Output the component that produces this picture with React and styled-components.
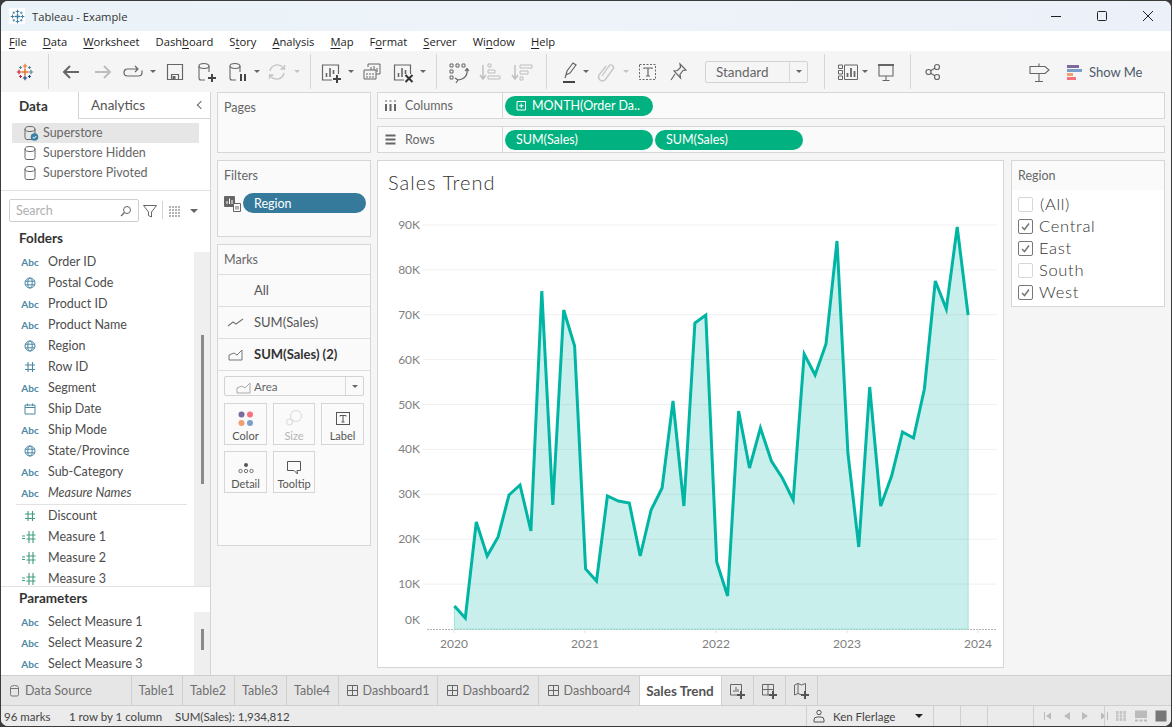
import React from "react";
import styled, { createGlobalStyle } from "styled-components";

const GlobalStyle = createGlobalStyle`
  html, body { margin: 0; padding: 0; height: 100%; background: #3b3b3b; overflow: hidden; }
  body { font-family: "Lato", "Liberation Sans", sans-serif; color: #555; }
  * { box-sizing: border-box; }
`;

const Svg = ({ size = 24, box, children, color }) => (
  <svg
    width={size}
    height={size}
    viewBox={box || `0 0 ${size} ${size}`}
    fill="none"
    stroke={color || "currentColor"}
    style={{ display: "block", flex: "none" }}
  >
    {children}
  </svg>
);

/* ---------- logos and toolbar icons ---------- */
const MarkCross = ({ x, y, r, w, c }) => (
  <path d={`M${x - r} ${y}H${x + r}M${x} ${y - r}V${y + r}`} stroke={c} strokeWidth={w} />
);

const TableauLogo = ({ colors }) => (
  <Svg size={18}>
    <MarkCross x={9} y={9} r={3.5} w={1.6} c={colors[0]} />
    <MarkCross x={9} y={3} r={2.2} w={1.2} c={colors[1]} />
    <MarkCross x={9} y={15} r={2.2} w={1.2} c={colors[2]} />
    <MarkCross x={3} y={9} r={2.2} w={1.2} c={colors[3]} />
    <MarkCross x={15} y={9} r={2.2} w={1.2} c={colors[4]} />
    <MarkCross x={4.5} y={4.5} r={1.5} w={1} c={colors[5]} />
    <MarkCross x={13.5} y={4.5} r={1.5} w={1} c={colors[5]} />
    <MarkCross x={4.5} y={13.5} r={1.5} w={1} c={colors[3]} />
    <MarkCross x={13.5} y={13.5} r={1.5} w={1} c={colors[2]} />
  </Svg>
);

const Plus = ({ x = 18, y = 18, c = "#444" }) => (
  <path d={`M${x - 4} ${y}H${x + 4}M${x} ${y - 4}V${y + 4}`} stroke={c} strokeWidth="2" />
);

const Arrow = ({ flip, color }) => (
  <Svg color={color}>
    <path d={flip ? "M4 12h15M13 6l6 6-6 6" : "M20 12H5M11 6l-6 6 6 6"} strokeWidth="2" />
  </Svg>
);
const CycleIcon = () => (
  <Svg>
    <path d="M3 12.5A3.5 3.5 0 0 1 6.5 9H17M21 10.5v2a3.5 3.5 0 0 1-3.5 3.5h-11A3.5 3.5 0 0 1 3 12.5M14 6l3 3-3 3" strokeWidth="1.2" />
  </Svg>
);
const SaveIcon = () => (
  <Svg>
    <path d="M4.5 4.5h15v15h-15zM8.5 19.5v-5h7v5" strokeWidth="1.2" />
    <rect x="9.5" y="16" width="3" height="3" fill="currentColor" stroke="none" />
  </Svg>
);
const Cylinder = ({ x = 9, h = 12 }) => (
  <>
    <ellipse cx={x} cy="6" rx="5" ry="2.5" strokeWidth="1.1" />
    <path d={`M${x - 5} 6v${h}a2 2 0 0 0 2 2h4M${x + 5} 6v6`} strokeWidth="1.1" />
  </>
);
const NewSourceIcon = () => (
  <Svg>
    <Cylinder />
    <Plus x={17} y={18} />
  </Svg>
);
const PauseSourceIcon = () => (
  <Svg>
    <Cylinder x={10} />
    <path d="M16 14v7M20 14v7" stroke="#444" strokeWidth="2" />
  </Svg>
);
const RefreshIcon = () => (
  <Svg color="#c4c4c4">
    <path d="M5 11a7.5 7.5 0 0 1 13-3.5l1.5 1.5M19 13a7.5 7.5 0 0 1-13 3.5L4.500 15M19.500 5v4h-4M4.500 19v-4h4" strokeWidth="1.3" />
  </Svg>
);
const NewSheetIcon = () => (
  <Svg>
    <path d="M13 20H3.500V5h16v9" strokeWidth="1.2" />
    <path d="M7.500 17v-4M11 17V8M14.500 14v-4" strokeWidth="1.6" />
    <Plus x={18} y={19} />
  </Svg>
);
const DuplicateIcon = () => (
  <Svg>
    <path d="M8 7V4h12v10h-4M4 10h12v9H4z" strokeWidth="1" />
    <path d="M11 10V7M14 10V6M17 12V8" strokeWidth="1" />
    <path d="M6 14h8M6 17h8" strokeWidth="1" strokeDasharray="2 1" />
  </Svg>
);
const ClearIcon = () => (
  <Svg>
    <path d="M13 20H3.500V5h16v9" strokeWidth="1.2" />
    <path d="M7.500 17v-4M11 17V8M14.500 14v-4" strokeWidth="1.6" />
    <path d="M14.500 15l7 7M21.500 15l-7 7" stroke="#333" strokeWidth="2" />
  </Svg>
);
const SwapIcon = () => (
  <Svg>
    <path d="M3 4h3v3H3zM9 4h3v3H9zM15 4h3v3h-3zM3 10h3v3H3zM3 16h3v3H3z" strokeWidth="1" />
    <path d="M20 9c1 6-2 10-9 11M8 18l3 2-2 3M18 11l2-2.500 2 2.500" strokeWidth="1.200" />
  </Svg>
);
const SortIcon = ({ desc }) => (
  <Svg color="#bdbdbd">
    <path d="M5 5v14M2 15l3 4 3-4" strokeWidth="1.4" />
    {desc ? (
      <path d="M10 5h12v3H10zM10 11h8v3h-8zM10 17h3v3h-3z" strokeWidth="1" />
    ) : (
      <path d="M10 4h3v3h-3zM10 10h7v3h-7zM10 16h12v3H10z" strokeWidth="1" />
    )}
  </Svg>
);
const HighlightIcon = () => (
  <Svg>
    <path d="M9 15l1-4 6-8 3 2-6 8zM8 18l1-3" strokeWidth="1.2" />
    <path d="M6 22h12" stroke="#444" strokeWidth="2" />
  </Svg>
);
const ClipIcon = () => (
  <Svg color="#c4c4c4">
    <path d="M8 16l7-10a2.500 2.500 0 0 1 4 3l-8 11a4 4 0 0 1-6-5l7-9" strokeWidth="1.300" />
  </Svg>
);
const LabelIcon = () => (
  <Svg>
    <rect x="3.500" y="4.500" width="16" height="15" strokeWidth="1" strokeDasharray="2 1.500" />
    <path d="M8 9V8h8v1M12 8v8M10 16h4" strokeWidth="1.200" />
  </Svg>
);
const PinIcon = () => (
  <Svg>
    <path d="M14 4l6 6-3 .5-3 4 .5 3.500L8 11l3.500-.5 3-3zM9 14l-4 6" strokeWidth="1.200" />
  </Svg>
);
const FitIcon = () => (
  <Svg>
    <path d="M1.500 5h4v3.500h-4zM1.500 10.500h4V14h-4zM1.500 16h4v3.500h-4zM7.500 5h13v14.500h-13z" strokeWidth="1" />
    <path d="M10.500 17v-4M14 17V8M17.500 17v-6" strokeWidth="1.800" />
  </Svg>
);
const PresentIcon = () => (
  <Svg>
    <path d="M4 5h16" strokeWidth="2" />
    <path d="M5 5v11h14V5M12 16v4.500M8.500 20.500h7" strokeWidth="1.100" />
  </Svg>
);
const ShareIcon = () => (
  <Svg>
    <circle cx="7.500" cy="12" r="2.500" strokeWidth="1.200" />
    <circle cx="16" cy="7" r="2.500" strokeWidth="1.200" />
    <circle cx="16" cy="17" r="2.500" strokeWidth="1.200" />
    <path d="M9.700 10.700l4-2.400M9.700 13.300l4 2.400" strokeWidth="1.200" />
  </Svg>
);
const GuideIcon = () => (
  <Svg>
    <path d="M3 6.500h15l4 3.500-4 3.500H3zM12 3.500v3M12 13.500v8M8 21.500h8" strokeWidth="1.100" />
  </Svg>
);
const ShowMeIcon = () => (
  <Svg size={16}>
    <rect x="0" y="1" width="12" height="3" fill="#7b6a9b" stroke="none" />
    <rect x="0" y="5" width="15" height="3" fill="#7a9fc9" stroke="none" />
    <rect x="0" y="9" width="6" height="3" fill="#f0a070" stroke="none" />
    <rect x="0" y="13" width="9" height="3" fill="#f8727d" stroke="none" />
  </Svg>
);
const Caret = styled.span`
  display: block;
  width: 0;
  height: 0;
  border-left: ${(p) => p.$size || 3}px solid transparent;
  border-right: ${(p) => p.$size || 3}px solid transparent;
  border-top: ${(p) => p.$size || 3}px solid ${(p) => p.$color || "#666"};
`;

/* ---------- data pane icons ---------- */
const HashIcon = ({ color }) => (
  <Svg size={14} color={color}>
    <path d="M5 2v10M9.500 2v10M2 5h10M2 9.500h10" strokeWidth="1.100" />
  </Svg>
);
const GlobeIcon = () => (
  <Svg size={14} color="#4b88a3">
    <circle cx="7" cy="7" r="5" strokeWidth="1" />
    <ellipse cx="7" cy="7" rx="2.200" ry="5" strokeWidth="1" />
    <path d="M2 5.200h10M2 8.800h10" strokeWidth="1" />
  </Svg>
);
const CalendarIcon = () => (
  <Svg size={14} color="#4b88a3">
    <path d="M2 3h10v9H2zM2 5.500h10M4.500 1.500v2.500M9.500 1.500v2.500" strokeWidth="1" />
  </Svg>
);
const CalcHashIcon = () => (
  <Svg size={18} color="#3f9e7c">
    <path d="M1 8h3M1 10.500h3" strokeWidth="1" />
    <path d="M8 3v12M12 3v12M5.500 7h9M5.500 11h9" strokeWidth="1.100" />
  </Svg>
);
const SourceIcon = ({ active }) => (
  <Svg size={16} color="#666">
    <ellipse cx="7" cy="4" rx="5" ry="2.500" strokeWidth="1" />
    <path d="M2 4v8.500a2 2 0 0 0 2 2h6a2 2 0 0 0 2-2V4" strokeWidth="1" />
    {active && (
      <>
        <circle cx="11.500" cy="12" r="3.800" fill="#3a7fa5" stroke="none" />
        <path d="M9.800 12l1.300 1.300 2.200-2.300" stroke="#fff" strokeWidth="1" />
      </>
    )}
  </Svg>
);
const DashIcon = () => (
  <Svg size={13} color="#666">
    <path d="M1.500 1.500h10v10h-10zM6.500 1.500v10M1.500 6.500h10" strokeWidth="1" />
  </Svg>
);

/* ---------- window chrome ---------- */
const Window = styled.div`
  margin: 1px;
  width: 1170px;
  height: 725px;
  display: flex;
  flex-direction: column;
  background: #f5f5f5;
  border-radius: 7px;
  overflow: hidden;
`;
const TitleBar = styled.div`
  height: 30px;
  flex: none;
  display: flex;
  align-items: center;
  padding-left: 8px;
  background: linear-gradient(90deg, #eaf3f8 0%, #eef3f9 50%, #ecf1f9 100%);
  font-family: "Open Sans", sans-serif;
  font-size: 11.2px;
  color: #333;
`;
const AppIcon = styled.span`
  width: 16px;
  height: 16px;
  margin-right: 7px;
  background: #fff;
  display: flex;
  align-items: center;
  justify-content: center;
  svg { width: 15px; height: 15px; }
`;
const WindowControls = styled.div`
  margin-left: auto;
  display: flex;
  color: #222;
`;
const WindowControl = styled.span`
  width: 46px;
  height: 30px;
  display: flex;
  align-items: center;
  justify-content: center;
`;
const MenuBar = styled.div`
  height: 20px;
  flex: none;
  display: flex;
  align-items: center;
  gap: 16px;
  padding-left: 8px;
  background: #fff;
  font-family: "Open Sans", sans-serif;
  font-size: 11.2px;
  color: #222;
`;
const MenuItem = styled.span`
  u { text-underline-offset: 2px; }
`;
const Toolbar = styled.div`
  height: 41px;
  flex: none;
  display: flex;
  align-items: center;
  background: #f5f5f5;
`;
const ToolSlot = styled.span`
  flex: none;
  display: flex;
  align-items: center;
  justify-content: center;
  width: ${(p) => p.$w || 24}px;
  margin-left: ${(p) => p.$ml || 0}px;
  color: ${(p) => p.$color || "#666"};
`;
const ToolSep = styled.span`
  flex: none;
  width: 1px;
  height: 35px;
  margin-left: ${(p) => p.$ml}px;
  background: #d6d6d6;
`;
const FitSelect = styled.div`
  flex: none;
  width: 103px;
  height: 22px;
  margin-left: 15px;
  display: flex;
  align-items: center;
  padding-left: 10px;
  border: 1px solid #d2d2d2;
  border-radius: 2px;
  font-size: 13.5px;
  color: #666;
`;
const FitCaret = styled.span`
  margin-left: auto;
  width: 18px;
  height: 100%;
  display: flex;
  align-items: center;
  justify-content: center;
  border-left: 1px solid #d8d8d8;
`;
const ShowMe = styled.div`
  margin-left: 16px;
  display: flex;
  align-items: center;
  gap: 6px;
  font-size: 13px;
  color: #4c5a6a;
  white-space: nowrap;
`;

/* ---------- workspace ---------- */
const Workspace = styled.div`
  flex: 1;
  min-height: 0;
  display: flex;
`;
const DataPane = styled.aside`
  width: 210px;
  flex: none;
  display: flex;
  flex-direction: column;
  background: #fff;
  border-right: 1px solid #d4d4d4;
`;
const PaneTabs = styled.div`
  height: 27px;
  flex: none;
  display: flex;
  font-size: 13.5px;
`;
const PaneTab = styled.div`
  width: ${(p) => (p.$active ? "77px" : "auto")};
  flex: ${(p) => (p.$active ? "none" : "1")};
  display: flex;
  align-items: center;
  padding-left: ${(p) => (p.$active ? "18px" : "12px")};
  padding-right: 6px;
  font-weight: ${(p) => (p.$active ? 700 : 400)};
  color: ${(p) => (p.$active ? "#333" : "#555")};
  border-left: ${(p) => (p.$active ? "none" : "1px solid #d4d4d4")};
  border-bottom: ${(p) => (p.$active ? "none" : "1px solid #d4d4d4")};
`;
const Chevron = styled.span`
  margin-left: auto;
  width: 6px;
  height: 6px;
  border-left: 1px solid #666;
  border-bottom: 1px solid #666;
  transform: rotate(45deg);
`;
const Sources = styled.div`
  height: 72px;
  flex: none;
  padding-top: 4px;
  border-bottom: 1px solid #e2e2e2;
`;
const SourceRow = styled.div`
  height: 20px;
  margin: 0 11px;
  padding: 0 0 1px 11px;
  display: flex;
  align-items: center;
  gap: 4px;
  font-size: 12.5px;
  color: #666;
  background: ${(p) => (p.$active ? "#e6e6e6" : "transparent")};
`;
const SearchRow = styled.div`
  height: 37px;
  flex: none;
  display: flex;
  align-items: flex-start;
  padding: 8px 0 0 8px;
  color: #666;
`;
const SearchBox = styled.div`
  width: 130px;
  height: 23px;
  display: flex;
  align-items: center;
  justify-content: space-between;
  padding: 0 5px 0 6px;
  border: 1px solid #cfcfcf;
  border-radius: 2px;
  font-size: 12.5px;
  color: #b0b0b0;
`;
const SearchTool = styled.span`
  display: flex;
  align-items: center;
  height: 23px;
  margin-left: ${(p) => p.$ml}px;
`;
const SearchDivider = styled.span`
  width: 1px;
  height: 18px;
  margin: 2px 0 0 4px;
  background: #d4d4d4;
`;
const SectionHead = styled.div`
  height: ${(p) => p.$h}px;
  flex: none;
  padding: ${(p) => p.$top || 0}px 0 0 18px;
  font-size: 13.5px;
  font-weight: 700;
  color: #333;
  line-height: 20px;
`;
const FieldArea = styled.div`
  flex: ${(p) => (p.$fill ? "1" : "none")};
  min-height: 0;
  height: ${(p) => (p.$h ? `${p.$h}px` : "auto")};
  display: flex;
  overflow: hidden;
`;
const FieldList = styled.div`
  flex: 1;
  margin-top: ${(p) => p.$mt}px;
`;
const FieldRow = styled.div`
  height: 21px;
  display: flex;
  align-items: center;
  padding-left: 17px;
  font-size: 12.5px;
  font-style: ${(p) => (p.$italic ? "italic" : "normal")};
  color: #4d4d4d;
`;
const FieldGlyph = styled.span`
  width: 24px;
  margin-right: 6px;
  display: flex;
  justify-content: center;
  font-size: 10px;
  font-weight: 700;
  font-style: normal;
  color: #4b88a3;
`;
const FieldDivider = styled.div`
  height: 1px;
  margin: 1px 7px 0 15px;
  background: #e2e2e2;
`;
const ScrollTrack = styled.div`
  width: 16px;
  flex: none;
  background: #efefef;
`;
const ScrollThumb = styled.div`
  width: 3px;
  height: ${(p) => p.$h}px;
  margin: ${(p) => p.$top}px 0 0 7px;
  background: #8a8a8a;
`;
const ParamHead = styled.div`
  flex: none;
  border-top: 1px solid #e2e2e2;
`;

const SideColumn = styled.div`
  width: 154px;
  flex: none;
  margin-left: 6px;
  display: flex;
  flex-direction: column;
  gap: 7px;
`;
const Card = styled.section`
  height: ${(p) => p.$h}px;
  flex: none;
  background: #fafafa;
  border: 1px solid #d6d6d6;
`;
const CardTitle = styled.div`
  height: 29px;
  padding: 7px 0 0 6px;
  font-size: 12.5px;
  color: #666;
`;
const FilterLine = styled.div`
  display: flex;
  align-items: center;
  gap: 2px;
  padding: 3px 4px 0 6px;
`;
const Pill = styled.div`
  width: ${(p) => p.$w}px;
  height: 20px;
  flex: ${(p) => (p.$stretch ? "1" : "none")};
  display: flex;
  align-items: center;
  gap: 5px;
  padding-left: ${(p) => p.$pad || 11}px;
  border-radius: 10px;
  background: ${(p) => p.$bg};
  color: #fff;
  font-size: 12.5px;
`;
const MarksRow = styled.div`
  height: 32px;
  display: flex;
  align-items: center;
  padding: 0 0 2px 9px;
  border-top: 1px solid #dedede;
  font-size: 13px;
  font-weight: ${(p) => (p.$bold ? 700 : 400)};
  color: ${(p) => (p.$bold ? "#333" : "#555")};
`;
const MarkGlyph = styled.span`
  width: 27px;
  display: flex;
`;
const MarksBody = styled.div`
  border-top: 1px solid #dedede;
  padding: 5px 6px 0;
`;
const MarkSelect = styled.div`
  height: 20px;
  display: flex;
  align-items: center;
  padding-left: 10px;
  gap: 3px;
  border: 1px solid #d2d2d2;
  border-radius: 2px;
  font-size: 11.5px;
  color: #666;
`;
const MarkGrid = styled.div`
  margin-top: 7px;
  display: grid;
  grid-template-columns: 43px 42px 43px;
  grid-auto-rows: 42px;
  gap: 6px;
`;
const MarkButton = styled.div`
  display: flex;
  flex-direction: column;
  align-items: center;
  justify-content: flex-end;
  padding-bottom: 2px;
  gap: 2px;
  border: 1px solid #d6d6d6;
  font-size: 11px;
  color: ${(p) => (p.$off ? "#b5b5b5" : "#555")};
`;

const CenterColumn = styled.div`
  width: 788px;
  flex: none;
  min-height: 0;
  margin-left: 6px;
  display: flex;
  flex-direction: column;
`;
const Shelf = styled.div`
  height: 27px;
  flex: none;
  margin-bottom: 7px;
  display: flex;
  background: #fafafa;
  border: 1px solid #d6d6d6;
`;
const ShelfLabel = styled.div`
  width: 125px;
  flex: none;
  display: flex;
  align-items: center;
  gap: 8px;
  padding-left: 6px;
  font-size: 12.5px;
  color: #666;
  border-right: 1px solid #d6d6d6;
`;
const ShelfPills = styled.div`
  display: flex;
  align-items: center;
  gap: 2px;
  padding-left: 2px;
`;
const ViewRow = styled.div`
  flex: 1;
  min-height: 0;
  display: flex;
  align-items: flex-start;
  gap: 7px;
`;
const ChartCard = styled.section`
  width: 627px;
  height: 508px;
  flex: none;
  display: flex;
  flex-direction: column;
  background: #fff;
  border: 1px solid #d6d6d6;
`;
const ChartTitle = styled.h1`
  height: 44px;
  flex: none;
  margin: 0;
  padding: 9px 0 0 10px;
  font-size: 20px;
  font-weight: 300;
  letter-spacing: 1px;
  color: #333;
`;
const RegionCard = styled.section`
  width: 154px;
  height: 147px;
  flex: none;
  background: #fff;
  border: 1px solid #d6d6d6;
`;
const RegionHead = styled.div`
  height: 29px;
  display: flex;
  align-items: center;
  padding-left: 6px;
  background: #fafafa;
  font-size: 12.5px;
  color: #666;
`;
const RegionList = styled.div`
  padding: 3px 0 0 6px;
`;
const RegionRow = styled.div`
  height: 22px;
  display: flex;
  align-items: center;
  gap: ${(p) => (p.$all ? 7 : 6)}px;
  font-size: 16.5px;
  font-weight: 300;
  letter-spacing: 0.7px;
  color: #333;
`;
const CheckBox = styled.span`
  width: 15px;
  height: 15px;
  flex: none;
  display: flex;
  align-items: center;
  justify-content: center;
  border: 1px solid ${(p) => (p.$on ? "#777" : "#d6d6d6")};
  border-radius: 2px;
  background: #fff;
`;

/* ---------- tabs and status ---------- */
const TabBar = styled.div`
  height: 31px;
  flex: none;
  display: flex;
  background: #e6e6e6;
  border-top: 1px solid #cfcfcf;
  border-bottom: 1px solid #cfcfcf;
`;
const SheetTab = styled.div`
  width: ${(p) => p.$w}px;
  flex: none;
  display: flex;
  align-items: center;
  justify-content: ${(p) => (p.$left ? "flex-start" : "center")};
  gap: 4px;
  padding: ${(p) => (p.$left ? "0 0 0 7px" : "0 1px 0 0")};
  font-size: ${(p) => (p.$active ? "13.5px" : "12.5px")};
  font-weight: ${(p) => (p.$active ? 700 : 400)};
  color: ${(p) => (p.$active ? "#555" : "#707070")};
  background: ${(p) => (p.$active ? "#fff" : "transparent")};
  border-right: 1px solid #cfcfcf;
`;
const StatusBar = styled.footer`
  height: 20px;
  flex: none;
  display: flex;
  align-items: center;
  background: #ebebeb;
  font-size: 11.5px;
  color: #444;
`;
const StatusText = styled.span`
  width: ${(p) => (p.$w ? `${p.$w}px` : "auto")};
  flex: none;
  padding-left: ${(p) => p.$pad || 0}px;
`;
const StatusCell = styled.div`
  width: ${(p) => p.$w}px;
  height: 100%;
  flex: none;
  display: flex;
  align-items: center;
  gap: ${(p) => p.$gap || 0}px;
  padding-left: ${(p) => p.$pad || 0}px;
  border-left: 1px solid #d0d0d0;
  margin-left: ${(p) => (p.$push ? "auto" : "0")};
`;

/* ---------- chart ---------- */
const salesY = [
  606, 618, 522, 556, 537, 495, 485, 531, 291, 505, 310, 346,
  569, 581, 496, 501, 503, 556, 510, 488, 401, 506, 323, 315,
  562, 596, 411, 468, 428, 461, 478, 500, 354, 375, 344, 241,
  453, 547, 387, 506, 476, 432, 438, 389, 281, 309, 227, 315,
];
const points = salesY.map((y, i) => [454.4 + i * 10.93, y]);
const linePath = points.map(([x, y], i) => `${i ? "L" : "M"}${x.toFixed(1)} ${y}`).join("");
const BASE_Y = 629;
const areaPath = `${linePath}L${points[47][0].toFixed(1)} ${BASE_Y}L454.4 ${BASE_Y}Z`;
const yTicks = [90, 80, 70, 60, 50, 40, 30, 20, 10, 0];
const xTicks = [2020, 2021, 2022, 2023, 2024];

const SalesChart = () => (
  <svg
    width="625"
    height="462"
    viewBox="378 205 625 462"
    style={{ display: "block", flex: "none" }}
    fontFamily="Lato, sans-serif"
    fontSize="12"
    fill="#808080"
  >
    {yTicks.map((k) => {
      const y = BASE_Y - k * 4.49;
      return (
        <g key={k}>
          {k > 0 && <path d={`M423 ${y}H997`} stroke="#f0f0f0" />}
          <text x="420" y={k === 0 ? 624 : y + 4} textAnchor="end" stroke="none">
            {k}K
          </text>
        </g>
      );
    })}
    <path d={`M427 ${BASE_Y + 0.5}H997`} stroke="#b5b5b5" strokeDasharray="2 1" />
    {xTicks.map((year, i) => {
      const x = 454 + i * 131;
      return (
        <g key={year}>
          <path d={`M${x} ${BASE_Y}v4`} stroke="#e0e0e0" />
          <text x={x} y="648" textAnchor="middle" stroke="none">
            {year}
          </text>
        </g>
      );
    })}
    <path d={areaPath} fill="#00b5a3" fillOpacity="0.21" stroke="#9fe3da" strokeWidth="1" />
    <path d={linePath} fill="none" stroke="#00b5a3" strokeWidth="3" strokeLinejoin="miter" />
  </svg>
);

/* ---------- content ---------- */
const menus = [
  ["F", "ile"], ["D", "ata"], ["W", "orksheet"], ["Dash", "board", 1], ["S", "tory", 1],
  ["A", "nalysis"], ["M", "ap"], ["F", "ormat", 1], ["S", "erver"], ["Wi", "ndow", 1], ["H", "elp"],
];

const renderMenu = ([head, rest, second], i) => {
  if (second) {
    return (
      <MenuItem key={i}>
        {head}<u>{rest[0]}</u>{rest.slice(1)}
      </MenuItem>
    );
  }
  return (
    <MenuItem key={i}>
      <u>{head}</u>{rest}
    </MenuItem>
  );
};

const dimensions = [
  ["abc", "Order ID"], ["globe", "Postal Code"], ["abc", "Product ID"], ["abc", "Product Name"],
  ["globe", "Region"], ["hash", "Row ID"], ["abc", "Segment"], ["date", "Ship Date"],
  ["abc", "Ship Mode"], ["globe", "State/Province"], ["abc", "Sub-Category"],
];
const measures = [["green", "Discount"], ["calc", "Measure 1"], ["calc", "Measure 2"], ["calc", "Measure 3"]];
const params = ["Select Measure 1", "Select Measure 2", "Select Measure 3"];

const Glyph = ({ kind }) => (
  <FieldGlyph>
    {kind === "abc" && "Abc"}
    {kind === "globe" && <GlobeIcon />}
    {kind === "hash" && <HashIcon color="#4b88a3" />}
    {kind === "green" && <HashIcon color="#3f9e7c" />}
    {kind === "date" && <CalendarIcon />}
    {kind === "calc" && <CalcHashIcon />}
  </FieldGlyph>
);

const regions = [
  ["(All)", false, true],
  ["Central", true],
  ["East", true],
  ["South", false],
  ["West", true],
];

const sheetTabs = [
  ["Table1", 51], ["Table2", 52], ["Table3", 52], ["Table4", 52],
];
const dashTabs = [["Dashboard1", 99], ["Dashboard2", 101], ["Dashboard4", 101]];

const LineGlyph = () => (
  <Svg size={18} color="#777">
    <path d="M1 13l5-4 3 2 7-5" strokeWidth="1.100" />
  </Svg>
);
const AreaGlyph = ({ color = "#777", size = 18 }) => (
  <Svg size={size} color={color}>
    <path d="M2 15V10l5-2 3 2 5-5v10z" strokeWidth="1" />
  </Svg>
);

const App = () => (
  <>
    <GlobalStyle />
    <Window>
      <TitleBar>
        <AppIcon>
          <TableauLogo colors={Array(6).fill("#3f7fa0")} />
        </AppIcon>
        Tableau - Example
        <WindowControls>
          <WindowControl>
            <Svg size={12}><path d="M1 6.500h10" strokeWidth="1" /></Svg>
          </WindowControl>
          <WindowControl>
            <Svg size={12}><rect x="1.500" y="1.500" width="9" height="9" rx="1" strokeWidth="1" /></Svg>
          </WindowControl>
          <WindowControl>
            <Svg size={12}><path d="M1 1l10 10M11 1L1 11" strokeWidth="1" /></Svg>
          </WindowControl>
        </WindowControls>
      </TitleBar>
      <MenuBar>{menus.map(renderMenu)}</MenuBar>
      <Toolbar>
        <ToolSlot $ml={12}>
          <TableauLogo colors={["#e8762c", "#e8762c", "#1f447d", "#c72037", "#5b879b", "#5b879b"]} />
        </ToolSlot>
        <ToolSep $ml={11} />
        <ToolSlot $ml={10}><Arrow /></ToolSlot>
        <ToolSlot $ml={8}><Arrow flip color="#bdbdbd" /></ToolSlot>
        <ToolSlot $ml={6}><CycleIcon /></ToolSlot>
        <ToolSlot $ml={4} $w={8}><Caret /></ToolSlot>
        <ToolSlot $ml={6}><SaveIcon /></ToolSlot>
        <ToolSlot $ml={8}><NewSourceIcon /></ToolSlot>
        <ToolSlot $ml={6}><PauseSourceIcon /></ToolSlot>
        <ToolSlot $ml={4} $w={8}><Caret /></ToolSlot>
        <ToolSlot $ml={4}><RefreshIcon /></ToolSlot>
        <ToolSlot $ml={4} $w={8}><Caret $color="#c4c4c4" /></ToolSlot>
        <ToolSep $ml={9} />
        <ToolSlot $ml={8}><NewSheetIcon /></ToolSlot>
        <ToolSlot $ml={4} $w={8}><Caret /></ToolSlot>
        <ToolSlot $ml={5}><DuplicateIcon /></ToolSlot>
        <ToolSlot $ml={7}><ClearIcon /></ToolSlot>
        <ToolSlot $ml={4} $w={8}><Caret /></ToolSlot>
        <ToolSep $ml={9} />
        <ToolSlot $ml={10}><SwapIcon /></ToolSlot>
        <ToolSlot $ml={7}><SortIcon /></ToolSlot>
        <ToolSlot $ml={8}><SortIcon desc /></ToolSlot>
        <ToolSep $ml={12} />
        <ToolSlot $ml={10}><HighlightIcon /></ToolSlot>
        <ToolSlot $ml={1} $w={8}><Caret /></ToolSlot>
        <ToolSlot $ml={4}><ClipIcon /></ToolSlot>
        <ToolSlot $ml={4} $w={8}><Caret $color="#c4c4c4" /></ToolSlot>
        <ToolSlot $ml={6}><LabelIcon /></ToolSlot>
        <ToolSlot $ml={6}><PinIcon /></ToolSlot>
        <FitSelect>
          Standard
          <FitCaret><Caret /></FitCaret>
        </FitSelect>
        <ToolSep $ml={16} />
        <ToolSlot $ml={12}><FitIcon /></ToolSlot>
        <ToolSlot $w={8}><Caret /></ToolSlot>
        <ToolSlot $ml={5}><PresentIcon /></ToolSlot>
        <ToolSep $ml={12} />
        <ToolSlot $ml={10}><ShareIcon /></ToolSlot>
        <ToolSlot $ml={82}><GuideIcon /></ToolSlot>
        <ShowMe>
          <ShowMeIcon />
          Show Me
        </ShowMe>
      </Toolbar>
      <Workspace>
        <DataPane>
          <PaneTabs>
            <PaneTab $active>Data</PaneTab>
            <PaneTab>
              Analytics
              <Chevron />
            </PaneTab>
          </PaneTabs>
          <Sources>
            <SourceRow $active><SourceIcon active /> Superstore</SourceRow>
            <SourceRow><SourceIcon /> Superstore Hidden</SourceRow>
            <SourceRow><SourceIcon /> Superstore Pivoted</SourceRow>
          </Sources>
          <SearchRow>
            <SearchBox>
              Search
              <Svg size={14} color="#666">
                <circle cx="8" cy="6" r="3.500" strokeWidth="1" />
                <path d="M5.500 8.500L2 12" strokeWidth="1.200" />
              </Svg>
            </SearchBox>
            <SearchTool $ml={3}>
              <Svg size={16} color="#666">
                <path d="M1.500 2.500h13L9.500 9v5l-3-1.500V9z" strokeWidth="1" />
              </Svg>
            </SearchTool>
            <SearchDivider />
            <SearchTool $ml={5}>
              <Svg size={14} color="#666">
                <path d="M1 3h2M4 3h9M1 6h2M4 6h9M1 9h2M4 9h9M1 12h2M4 12h9" strokeWidth="1" strokeDasharray="2 1" />
              </Svg>
            </SearchTool>
            <SearchTool $ml={8}><Caret $size={4} /></SearchTool>
          </SearchRow>
          <SectionHead $h={24}>Folders</SectionHead>
          <FieldArea $fill>
            <FieldList $mt={-1}>
              {dimensions.map(([kind, name]) => (
                <FieldRow key={name}>
                  <Glyph kind={kind} />
                  {name}
                </FieldRow>
              ))}
              <FieldRow $italic>
                <Glyph kind="abc" />
                Measure Names
              </FieldRow>
              <FieldDivider />
              {measures.map(([kind, name]) => (
                <FieldRow key={name}>
                  <Glyph kind={kind} />
                  {name}
                </FieldRow>
              ))}
            </FieldList>
            <ScrollTrack>
              <ScrollThumb $top={83} $h={149} />
            </ScrollTrack>
          </FieldArea>
          <ParamHead>
            <SectionHead $h={25} $top={1}>Parameters</SectionHead>
          </ParamHead>
          <FieldArea $h={63}>
            <FieldList $mt={-1}>
              {params.map((name) => (
                <FieldRow key={name}>
                  <Glyph kind="abc" />
                  {name}
                </FieldRow>
              ))}
            </FieldList>
            <ScrollTrack>
              <ScrollThumb $top={17} $h={21} />
            </ScrollTrack>
          </FieldArea>
        </DataPane>

        <SideColumn>
          <Card $h={61}>
            <CardTitle>Pages</CardTitle>
          </Card>
          <Card $h={77}>
            <CardTitle>Filters</CardTitle>
            <FilterLine>
              <Svg size={17} color="#666">
                <rect x="0" y="1" width="11" height="11" rx="1" fill="#666" stroke="none" />
                <path d="M3 9V6M5.500 9V3.500M8 9V5" stroke="#fff" strokeWidth="1" />
                <path d="M9.500 8.500h7v8h-7zM12 11v3.500M14 11v3.500" strokeWidth="1" fill="#fafafa" />
              </Svg>
              <Pill $stretch $bg="#35799b">Region</Pill>
            </FilterLine>
          </Card>
          <Card $h={302}>
            <CardTitle>Marks</CardTitle>
            <MarksRow>
              <MarkGlyph />
              All
            </MarksRow>
            <MarksRow>
              <MarkGlyph><LineGlyph /></MarkGlyph>
              SUM(Sales)
            </MarksRow>
            <MarksRow $bold>
              <MarkGlyph><AreaGlyph /></MarkGlyph>
              SUM(Sales) (2)
            </MarksRow>
            <MarksBody>
              <MarkSelect>
                <AreaGlyph color="#aaa" size={16} />
                Area
                <FitCaret><Caret $size={3.500} /></FitCaret>
              </MarkSelect>
              <MarkGrid>
                <MarkButton>
                  <Svg size={16}>
                    <circle cx="3.500" cy="3.500" r="3" fill="#7b6a9b" stroke="none" />
                    <circle cx="12" cy="3.500" r="3" fill="#f8727d" stroke="none" />
                    <circle cx="3.500" cy="12" r="3" fill="#f0a070" stroke="none" />
                    <circle cx="12" cy="12" r="3" fill="#7a9fc9" stroke="none" />
                  </Svg>
                  Color
                </MarkButton>
                <MarkButton $off>
                  <Svg size={18} color="#d8d8d8">
                    <circle cx="11" cy="7" r="5.500" strokeWidth="1" />
                    <circle cx="4.500" cy="13" r="3" strokeWidth="1" />
                  </Svg>
                  Size
                </MarkButton>
                <MarkButton>
                  <Svg size={16} color="#555">
                    <rect x="1.500" y="1.500" width="13" height="12" strokeWidth="1" />
                    <path d="M5 5.500V4.500h6v1M8 4.500v6.500M6.500 11h3" strokeWidth="1" />
                  </Svg>
                  Label
                </MarkButton>
                <MarkButton>
                  <Svg size={16} color="#555">
                    <circle cx="8" cy="6" r="2" fill="#555" stroke="none" />
                    <circle cx="2.500" cy="12" r="1.700" strokeWidth="0.800" />
                    <circle cx="8" cy="12" r="1.700" strokeWidth="0.800" />
                    <circle cx="13.500" cy="12" r="1.700" strokeWidth="0.800" />
                  </Svg>
                  Detail
                </MarkButton>
                <MarkButton>
                  <Svg size={16} color="#555">
                    <path d="M1.500 2.500h13v9H11l.5 3.500L8 11.500H1.500z" strokeWidth="1" />
                  </Svg>
                  Tooltip
                </MarkButton>
              </MarkGrid>
            </MarksBody>
          </Card>
        </SideColumn>

        <CenterColumn>
          <Shelf>
            <ShelfLabel>
              <Svg size={13} color="#666">
                <path d="M2 1.500v2M6.500 1.500v2M11 1.500v2" strokeWidth="2" strokeDasharray="1 1" />
                <path d="M2 5v7M6.500 5v7M11 5v7" strokeWidth="2" />
              </Svg>
              Columns
            </ShelfLabel>
            <ShelfPills>
              <Pill $w={148} $bg="#02b180" $pad={11}>
                <Svg size={11} color="#fff">
                  <path d="M1 1.500h8.500v8.500H1zM5.250 3.500v4.500M3 5.750h4.500" strokeWidth="1" />
                </Svg>
                MONTH(Order Da..
              </Pill>
            </ShelfPills>
          </Shelf>
          <Shelf>
            <ShelfLabel>
              <Svg size={13} color="#666">
                <path d="M1.500 2.500h10M1.500 6.500h10M1.500 10.500h10" strokeWidth="2" />
              </Svg>
              Rows
            </ShelfLabel>
            <ShelfPills>
              <Pill $w={148} $bg="#02b180">SUM(Sales)</Pill>
              <Pill $w={148} $bg="#02b180">SUM(Sales)</Pill>
            </ShelfPills>
          </Shelf>
          <ViewRow>
            <ChartCard>
              <ChartTitle>Sales Trend</ChartTitle>
              <SalesChart />
            </ChartCard>
            <RegionCard>
              <RegionHead>Region</RegionHead>
              <RegionList>
                {regions.map(([name, on, all]) => (
                  <RegionRow key={name} $all={all}>
                    <CheckBox $on={on}>
                      {on && (
                        <Svg size={11} color="#777">
                          <path d="M2 6l2.500 2.500L9 2.500" strokeWidth="1.500" />
                        </Svg>
                      )}
                    </CheckBox>
                    {name}
                  </RegionRow>
                ))}
              </RegionList>
            </RegionCard>
          </ViewRow>
        </CenterColumn>
      </Workspace>
      <TabBar>
        <SheetTab $w={131} $left>
          <Svg size={13} color="#777">
            <path d="M2.500 3.500a4 2 0 0 1 8 0v7a1.500 1.500 0 0 1-1.500 1.500H4a1.500 1.500 0 0 1-1.500-1.500zM2.500 4.500h8" strokeWidth="1" />
          </Svg>
          Data Source
        </SheetTab>
        {sheetTabs.map(([name, w]) => (
          <SheetTab key={name} $w={w}>{name}</SheetTab>
        ))}
        {dashTabs.map(([name, w]) => (
          <SheetTab key={name} $w={w}>
            <DashIcon />
            {name}
          </SheetTab>
        ))}
        <SheetTab $w={82} $active>Sales Trend</SheetTab>
        <SheetTab $w={32}>
          <Svg size={18} color="#666">
            <path d="M10 13H2.500V2.500h11V9" strokeWidth="1" />
            <path d="M6 10V8M8 10V5M10 10V7" strokeWidth="1" />
            <Plus x={13} y={13} c="#555" />
          </Svg>
        </SheetTab>
        <SheetTab $w={32}>
          <Svg size={18} color="#666">
            <path d="M10 13H2.500V2.500h11V9M8 2.500V13M2.500 7.500h11" strokeWidth="1" />
            <Plus x={13} y={13} c="#555" />
          </Svg>
        </SheetTab>
        <SheetTab $w={32}>
          <Svg size={18} color="#666">
            <path d="M10 13L6 11.500 2.500 13V3L6 1.500 9.500 3l4-1.500V9M6 1.500v10" strokeWidth="1" />
            <Plus x={13} y={13} c="#555" />
          </Svg>
        </SheetTab>
      </TabBar>
      <StatusBar>
        <StatusText $w={68} $pad={3}>96 marks</StatusText>
        <StatusText $w={106}>1 row by 1 column</StatusText>
        <StatusText>SUM(Sales): 1,934,812</StatusText>
        <StatusCell $push $w={127} $pad={5}>
          <Svg size={14} color="#555">
            <circle cx="7" cy="3.500" r="2.200" strokeWidth="1" />
            <path d="M2 13v-2a3 3 0 0 1 3-3h4a3 3 0 0 1 3 3v2z" strokeWidth="1" />
          </Svg>
          <StatusText $w={89} $pad={7}>Ken Flerlage</StatusText>
          <Caret $size={4} $color="#222" />
        </StatusCell>
        <StatusCell $w={27} />
        <StatusCell $w={27} />
        <StatusCell $w={46} />
        <StatusCell $w={71} $pad={8} $gap={8}>
          <Svg size={12} color="#bbb">
            <path d="M2.500 2v8" strokeWidth="1" />
            <path d="M9 2.500v7L4 6z" fill="#bbb" stroke="none" />
          </Svg>
          <Svg size={10} color="#bbb">
            <path d="M8 1v8L2 5z" fill="#bbb" stroke="none" />
          </Svg>
          <Svg size={10} color="#bbb">
            <path d="M2 1v8l6-4z" fill="#bbb" stroke="none" />
          </Svg>
          <Svg size={12} color="#bbb">
            <path d="M9.500 2v8" strokeWidth="1" />
            <path d="M3 2.500v7L8 6z" fill="#bbb" stroke="none" />
          </Svg>
        </StatusCell>
        <StatusCell $w={67} $pad={10} $gap={8}>
          <Svg size={12} color="#c4c4c4">
            <path d="M1 2.500h10M1 6h10M1 9.500h10" strokeWidth="3" strokeDasharray="2.500 1.200" />
          </Svg>
          <Svg size={12} color="#bbb">
            <rect x="0" y="0.500" width="12" height="7.500" fill="#bbb" stroke="none" />
            <path d="M0 10.500h12" strokeWidth="2" strokeDasharray="3 1.500" />
          </Svg>
          <Svg size={12}>
            <rect x="0.500" y="0.500" width="11" height="11" fill="#777" stroke="none" />
          </Svg>
        </StatusCell>
      </StatusBar>
    </Window>
  </>
);

export default App;
